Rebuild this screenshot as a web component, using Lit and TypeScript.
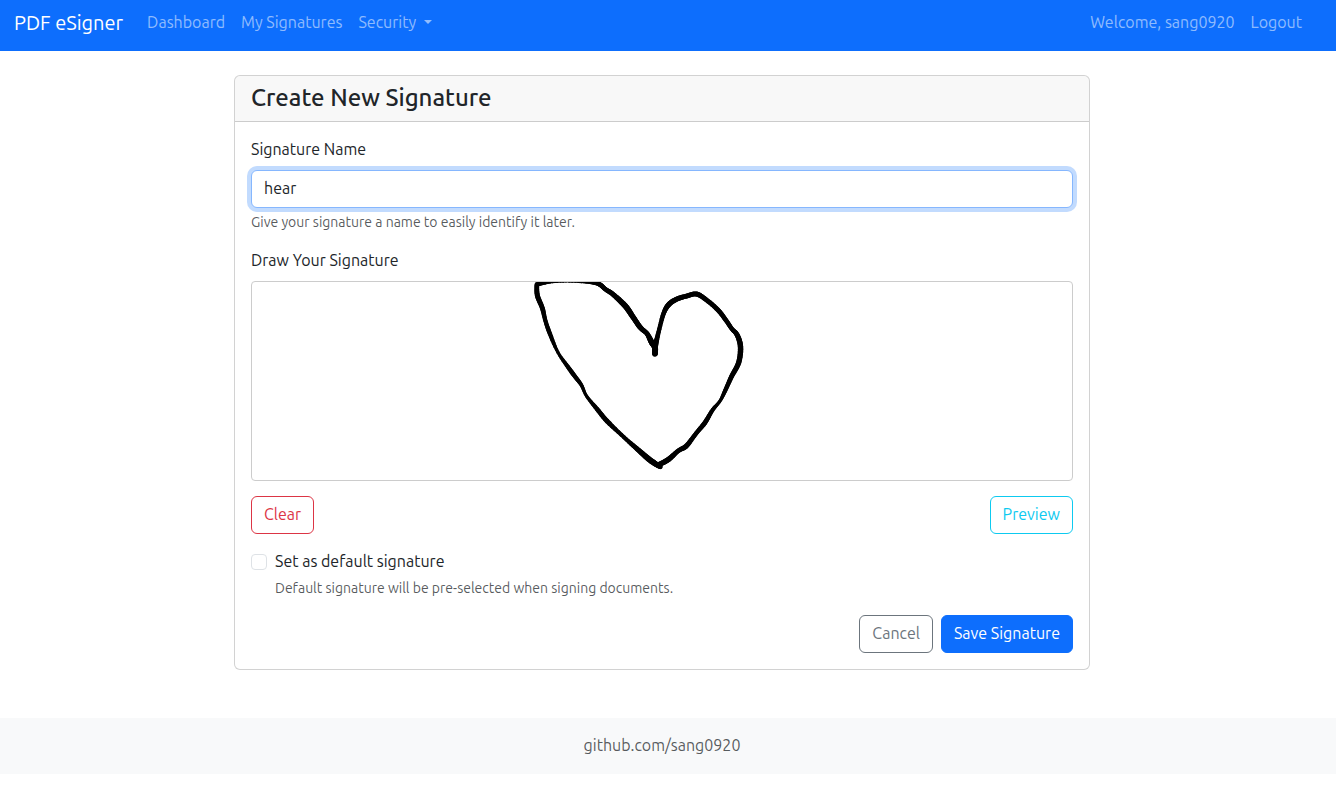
import { LitElement, html, css, svg } from "lit";
import { customElement, property, state } from "lit/decorators.js";

/** One pen sample: x, y and stroke width at that point. */
type Sample = [number, number, number];

const LEFT: Sample[] = [
  [655, 353.8, 5.4], [655, 347.5, 5.8], [651.5, 342, 5.8], [647, 333.6, 4.8], [640.4, 327.6, 5.2],
  [633, 317, 5.4], [625.3, 306, 5.8], [613, 294.3, 5], [605.5, 289.3, 4.6], [600, 284.6, 4.6],
  [594, 283, 3.6], [584, 282.2, 2.4], [566, 281.6, 2], [550, 282.4, 2.4], [537.2, 284.3, 4.6],
];

const LOWER: Sample[] = [
  [536.8, 284.5, 4.6], [537.4, 295.6, 5], [542.3, 308, 4.8], [545.5, 321, 4.2], [550, 334, 4.4],
  [558, 352.5, 3.2], [568, 367, 4.2], [575, 376.5, 4.4], [581.5, 385.2, 3.6], [586.5, 396, 3.2],
  [597, 409, 4.4], [607, 421, 4.8], [624, 437.3, 4], [637, 448.8, 5], [648.7, 459, 5.8],
  [656.5, 464.5, 5.4], [660.6, 467, 4.2],
];

const RIGHT: Sample[] = [
  [655, 353.8, 5.4], [655.4, 346, 5.4], [658.6, 332, 4.4], [663.6, 313.5, 4.6], [669, 304.3, 5.2],
  [677, 299, 5], [686.5, 296.1, 4.8], [696.4, 294, 5], [706, 299.6, 4.8], [718, 310, 4.8],
  [726.5, 321, 4.6], [731.8, 328.8, 4.4], [737.2, 335, 5], [740.5, 346.8, 5.4], [738.7, 362.5, 5.2],
  [731.5, 376.6, 4.8], [725, 391, 4.2], [720, 401, 3.2], [712.6, 410, 4], [705, 422.6, 4.8],
  [696, 433.5, 4.4], [686.5, 445.8, 5], [678.3, 450.8, 4.6], [668.5, 459.4, 5.4], [659, 464.6, 5],
];

const STEPS = 6;

/** Runs a Catmull-Rom curve through the samples. */
function smooth(points: Sample[]): Sample[] {
  const out: Sample[] = [points[0]];
  for (let i = 0; i < points.length - 1; i++) {
    const a = points[Math.max(i - 1, 0)];
    const b = points[i];
    const c = points[i + 1];
    const d = points[Math.min(i + 2, points.length - 1)];
    for (let s = 1; s <= STEPS; s++) {
      const t = s / STEPS;
      const at = (k: number) =>
        0.5 * (2 * b[k] + (c[k] - a[k]) * t + (2 * a[k] - 5 * b[k] + 4 * c[k] - d[k]) * t * t +
          (3 * b[k] - a[k] - 3 * c[k] + d[k]) * t * t * t);
      out.push([at(0), at(1), at(2)]);
    }
  }
  return out;
}

@customElement("signature-pad")
export class SignaturePad extends LitElement {
  @property({ attribute: false }) strokes: Sample[][] = [];

  static styles = css`
    :host {
      display: block;
      box-sizing: border-box;
      height: 200px;
      border: 1px solid #ccc;
      border-radius: 4px;
      background: #fff;
      overflow: hidden;
    }
    .ink { display: block; width: 100%; height: 100%; }
    .segment { stroke: #000; stroke-linecap: round; }
  `;

  private segments(samples: Sample[]) {
    const points = smooth(samples);
    return points.slice(1).map(([x, y, w], i) => {
      const [px, py, pw] = points[i];
      return svg`<line class="segment" x1=${px} y1=${py} x2=${x} y2=${y} stroke-width=${(w + pw) / 2}></line>`;
    });
  }

  render() {
    return html`<svg class="ink" viewBox="252 282 820 198" preserveAspectRatio="xMinYMin" aria-label="Signature">
      ${this.strokes.map((s) => this.segments(s))}
    </svg>`;
  }
}

@customElement("app-root")
export class AppRoot extends LitElement {
  @state() private strokes: Sample[][] = [LEFT, LOWER, RIGHT];

  static styles = css`
    :host {
      display: block;
      font: 400 16px/24px Ubuntu, "Noto Sans", sans-serif;
      color: #212529;
      background: #fff;
    }
    * { box-sizing: border-box; }
    .navbar {
      display: flex;
      align-items: center;
      height: 51px;
      padding: 3px 26px 8px 14px;
      background: #0d6efd;
    }
    .brand { margin-right: 16px; font-size: 20px; line-height: 30px; color: #fff; text-decoration: none; }
    .nav { display: flex; }
    .nav.end { margin-left: auto; }
    .link { padding: 7px 8px 9px; color: rgba(255, 255, 255, 0.55); text-decoration: none; }
    .toggle::after {
      content: "";
      display: inline-block;
      margin-left: 4.08px;
      vertical-align: 4.08px;
      border-top: 4.8px solid;
      border-right: 4.8px solid transparent;
      border-left: 4.8px solid transparent;
    }
    .page { display: flex; justify-content: center; padding: 24px 12px 48px 0; }
    .card {
      width: 856px;
      border: 1px solid rgba(0, 0, 0, 0.175);
      border-radius: 6px;
      background: #fff;
    }
    .header {
      padding: 8px 16px;
      border-bottom: 1px solid rgba(0, 0, 0, 0.175);
      border-radius: 5px 5px 0 0;
      background: rgba(33, 37, 41, 0.03);
    }
    .title { margin: 0; font-size: 24px; font-weight: 500; line-height: 28.8px; }
    .body { padding: 16px; }
    .group { margin-bottom: 16px; }
    .label { display: block; margin: -1px 0 9px; }
    .input {
      display: block;
      width: 100%;
      height: 38px;
      padding: 5px 12px 7px;
      border: 1px solid #86b7fe;
      border-radius: 6px;
      outline: 0;
      box-shadow: 0 0 0 4px rgba(13, 110, 253, 0.25);
      font: inherit;
      color: inherit;
      background: #fff;
    }
    .hint { margin-top: 4px; font-size: 14px; line-height: 21px; color: rgba(33, 37, 41, 0.75); }
    .row { display: flex; justify-content: space-between; margin: 15px 0 16px; }
    .btn {
      height: 38px;
      padding: 5px 12px 7px;
      border: 1px solid currentColor;
      border-radius: 6px;
      font: inherit;
      background: transparent;
      cursor: pointer;
    }
    .danger { color: #dc3545; }
    .info { color: #0dcaf0; }
    .secondary { color: #6c757d; }
    .primary { color: #fff; border-color: #0d6efd; background: #0d6efd; }
    .check { display: grid; grid-template-columns: 16px 1fr; column-gap: 8px; margin-bottom: 16px; }
    .box {
      appearance: none;
      width: 16px;
      height: 16px;
      margin: 4px 0 0;
      border: 1px solid #dee2e6;
      border-radius: 4px;
      background: #fff;
    }
    .check-label { margin: -1px 0 1px; }
    .check .hint { grid-column: 2; }
    .actions { display: flex; justify-content: flex-end; gap: 8px; }
    .footer {
      padding: 15px 12px 17px 0;
      text-align: center;
      color: rgba(33, 37, 41, 0.75);
      background: #f8f9fa;
    }
  `;

  render() {
    return html`
      <nav class="navbar">
        <a class="brand">PDF eSigner</a>
        <div class="nav">
          <a class="link">Dashboard</a>
          <a class="link">My Signatures</a>
          <a class="link toggle">Security </a>
        </div>
        <div class="nav end">
          <span class="link">Welcome, sang0920</span>
          <a class="link">Logout</a>
        </div>
      </nav>
      <main class="page">
        <section class="card">
          <div class="header"><h4 class="title">Create New Signature</h4></div>
          <div class="body">
            <div class="group">
              <label class="label" for="name">Signature Name</label>
              <input class="input" id="name" type="text" .value=${"hear"} />
              <div class="hint">Give your signature a name to easily identify it later.</div>
            </div>
            <div class="label">Draw Your Signature</div>
            <signature-pad .strokes=${this.strokes}></signature-pad>
            <div class="row">
              <button class="btn danger" @click=${() => (this.strokes = [])}>Clear</button>
              <button class="btn info">Preview</button>
            </div>
            <div class="check">
              <input class="box" id="default" type="checkbox" />
              <label class="check-label" for="default">Set as default signature</label>
              <div class="hint">Default signature will be pre-selected when signing documents.</div>
            </div>
            <div class="actions">
              <button class="btn secondary">Cancel</button>
              <button class="btn primary">Save Signature</button>
            </div>
          </div>
        </section>
      </main>
      <footer class="footer">github.com/sang0920</footer>
    `;
  }
}
